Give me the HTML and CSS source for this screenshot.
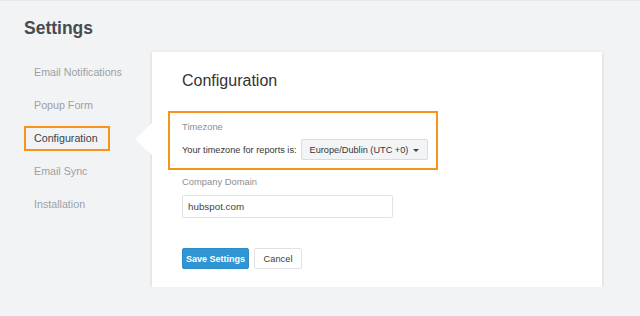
FILE: index.html
```html
<!DOCTYPE html>
<html>
<head>
<title>Settings</title>
<link rel="stylesheet" href="styles.css">
</head>
<body>
<div class="page">
    <h1 class="title">Settings</h1>
    <div class="layout">
        <ul class="sidebar">
            <li class="navitem">Email Notifications</li>
            <li class="navitem">Popup Form</li>
            <li class="navitem active">Configuration</li>
            <li class="navitem">Email Sync</li>
            <li class="navitem">Installation</li>
        </ul>
        <div class="card">
            <h2 class="cardtitle">Configuration</h2>
            <div class="timezonebox">
                <div class="label">Timezone</div>
                <div class="timezonerow">
                    <span class="rowtext">Your timezone for reports is:</span>
                    <button class="dropdown">Europe/Dublin (UTC +0) <span class="caret"></span></button>
                </div>
            </div>
            <div class="label domainlabel">Company Domain</div>
            <input class="textinput" type="text" value="hubspot.com">
            <div class="buttons">
                <button class="save">Save Settings</button>
                <button class="cancel">Cancel</button>
            </div>
        </div>
    </div>
</div>
</body>
</html>
```

FILE: styles.css
```css
body {
    margin: 0;
    background-color: #f2f3f5;
    font-family: "Liberation Sans", Arial, sans-serif;
}

.page {
    border-top: 1px solid #e6e8eb;
    padding: 15px 0 0 24px;
}

.title {
    margin: 0 0 12px 0;
    font-size: 17.5px;
    line-height: 24px;
    font-weight: bold;
    color: #474c52;
}

.layout {
    display: flex;
}

.sidebar {
    list-style: none;
    margin: 0;
    padding: 8px 0 0 0;
    width: 128px;
    display: flex;
    flex-direction: column;
    align-items: flex-start;
}

.navitem {
    font-size: 10.7px;
    line-height: 21px;
    color: #9ca1a7;
    border: 2px solid transparent;
    padding: 0 10px 0 8px;
    margin-bottom: 8px;
}

.navitem.active {
    color: #3c4146;
    border-color: #f7941e;
}

.card {
    position: relative;
    width: 390px;
    height: 198px;
    padding: 18px 30px 19px 30px;
    background-color: #fff;
    box-shadow: 0 1px 3px rgba(0, 0, 0, 0.16);
}

.card::before {
    content: '';
    position: absolute;
    left: -17px;
    top: 70px;
    width: 18px;
    height: 34px;
    background-color: #fff;
    clip-path: polygon(100% 0, 0 50%, 100% 100%);
}

.cardtitle {
    margin: 0 0 19px 0;
    font-size: 16px;
    line-height: 22px;
    font-weight: normal;
    color: #333;
}

.timezonebox {
    margin-left: -14px;
    width: 242px;
    padding: 8px 12px 8px 12px;
    border: 2px solid #f7941e;
}

.label {
    font-size: 9.4px;
    line-height: 12px;
    color: #8a8f95;
}

.timezonerow {
    display: flex;
    align-items: center;
    margin-top: 6px;
}

.rowtext {
    flex-shrink: 0;
    white-space: nowrap;
    font-size: 9.2px;
    color: #33373b;
    margin-right: 4px;
}

.dropdown {
    flex-shrink: 0;
    white-space: nowrap;
    height: 21px;
    width: 127px;
    padding: 0 0 0 8px;
    text-align: left;
    font-family: inherit;
    font-size: 9.2px;
    color: #33373b;
    background-color: #f3f4f5;
    border: 1px solid #d9dbde;
    border-radius: 2px;
}

.caret {
    display: inline-block;
    margin-left: 2px;
    vertical-align: middle;
    border-left: 3px solid transparent;
    border-right: 3px solid transparent;
    border-top: 3px solid #444;
}

.domainlabel {
    margin-top: 6px;
}

.textinput {
    display: block;
    box-sizing: border-box;
    margin-top: 7px;
    width: 211px;
    height: 23px;
    padding: 0 5px;
    font-family: inherit;
    font-size: 9.8px;
    color: #444;
    border: 1px solid #e0e2e5;
    border-radius: 2px;
}

.buttons {
    display: flex;
    gap: 5px;
    margin-top: 30px;
}

.save {
    height: 21px;
    width: 67px;
    padding: 0;
    font-family: inherit;
    font-size: 9px;
    font-weight: bold;
    color: #fff;
    background-color: #2f95d3;
    border: 1px solid #2b8cc7;
    border-radius: 2px;
}

.cancel {
    height: 21px;
    width: 48px;
    padding: 0;
    font-family: inherit;
    font-size: 9.3px;
    color: #3c4146;
    background-color: #fff;
    border: 1px solid #e0e2e5;
    border-radius: 2px;
}
```
